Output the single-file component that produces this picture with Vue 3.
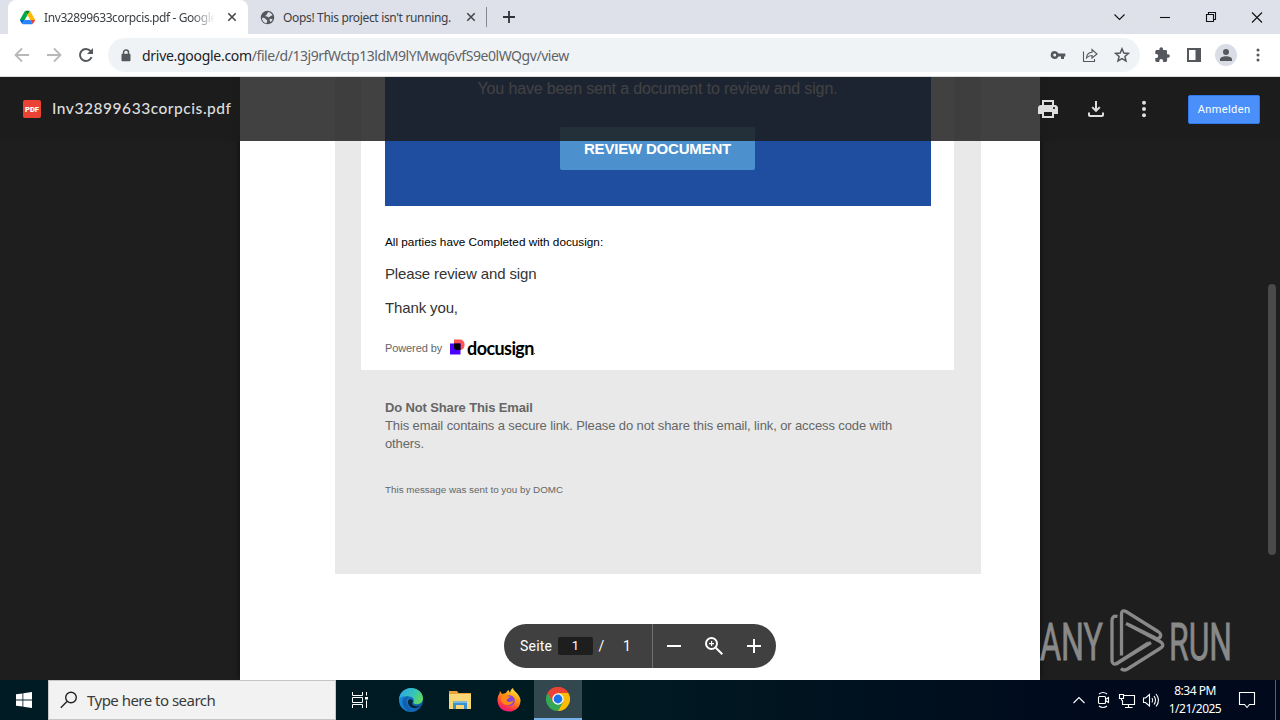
<script setup>
const url = { host: 'drive.google.com', path: '/file/d/13j9rfWctp13ldM9lYMwq6vfS9e0lWQgv/view' }
</script>

<template>
  <div class="desktop">
    <header class="tabstrip">
      <div class="tab active">
        <svg class="i16" viewBox="0 0 87.3 78">
          <path d="m6.6 66.85 3.85 6.65c.8 1.4 1.95 2.5 3.3 3.3l13.75-23.8h-27.5c0 1.55.4 3.1 1.2 4.5z" fill="#0066da" />
          <path d="m43.65 25-13.75-23.8c-1.35.8-2.5 1.9-3.3 3.3l-25.4 44a9.06 9.06 0 0 0-1.2 4.5h27.5z" fill="#00ac47" />
          <path d="m73.55 76.8c1.35-.8 2.5-1.9 3.3-3.3l1.6-2.75 7.65-13.25c.8-1.4 1.2-2.95 1.2-4.5h-27.5l5.85 11.5z" fill="#ea4335" />
          <path d="m43.65 25 13.75-23.8c-1.35-.8-2.9-1.2-4.5-1.2h-18.5c-1.6 0-3.15.45-4.5 1.2z" fill="#00832d" />
          <path d="m59.8 53h-32.3l-13.75 23.8c1.35.8 2.9 1.2 4.5 1.2h50.8c1.6 0 3.15-.45 4.5-1.2z" fill="#2684fc" />
          <path d="m73.4 26.5-12.7-22c-.8-1.4-1.95-2.5-3.3-3.3l-13.75 23.8 16.15 28h27.45c0-1.55-.4-3.1-1.2-4.5z" fill="#ffba00" />
        </svg>
        <span class="tab-title first">Inv32899633corpcis.pdf - Google</span>
        <svg class="x" viewBox="0 0 10 10"><path d="M1.3 1.3l7.4 7.4M8.7 1.3L1.3 8.7" /></svg>
      </div>
      <div class="tab second">
        <svg class="i16" viewBox="0 0 16 16">
          <circle cx="8" cy="8" r="7.2" fill="#54585d" />
          <path d="M2.2 8.2c2 .1 3.3.4 3.8 1.4.3.8 1.5.7 1.7 1.6.2 1-.4 1.4-.6 3C4 13.700 2 11.500 2.200 8.200zM8.300 2.100c2.100 0 4.200 1.400 5 3.400l-2.200 1.100c-1.200.5-.8 1.500-2 1.300-1.100-.2-1.300-1.300-2.700-1.100-.9.100-1.100-1 .1-1.300 1.400-.3.200-1.700 1.800-2zM10.500 9.500c1.100-.4 2.200 0 3 .3-.5 1.300-1.300 2.400-2.500 3.100-.3-1.300-1.300-2.700-.5-3.400z" fill="#dee1e8" />
        </svg>
        <span class="tab-title other">Oops! This project isn't running.</span>
        <svg class="x" viewBox="0 0 10 10"><path d="M1.3 1.3l7.4 7.400M8.700 1.300L1.300 8.700" /></svg>
      </div>
      <i class="tab-sep"></i>
      <svg class="plus" viewBox="0 0 14 14"><path d="M7 1v12M1 7h12" /></svg>
      <div class="win">
        <svg viewBox="0 0 46 28"><path d="M22.500 11.500l5 5 5-5" /></svg>
        <svg viewBox="0 0 46 28"><path d="M18 14.500h10" /></svg>
        <svg viewBox="0 0 46 28"><path d="M18.500 11.500h7v7h-7zM20.500 11.500v-2h7v7h-2" /></svg>
        <svg viewBox="0 0 46 28"><path d="M18 9.500l10 10M28 9.500l-10 10" /></svg>
      </div>
    </header>

    <div class="toolbar">
      <nav class="nav">
        <svg class="off" viewBox="0 0 16 16"><path d="M15 8H2M8 1.500L1.500 8 8 14.500" /></svg>
        <svg class="off" viewBox="0 0 16 16"><path d="M1 8h13M8 1.500L14.500 8 8 14.500" /></svg>
        <svg viewBox="0 0 16 16"><path d="M13.600 10A6 6 0 1 1 12.600 4.100L14 5.600" stroke-width="2" /><path d="M15 1v6H9z" class="solid" /></svg>
      </nav>
      <div class="omnibox">
        <svg class="lock" viewBox="0 0 10 13"><path d="M2.500 5.500V3.500a2.500 2.500 0 0 1 5 0v2" fill="none" stroke="#54585d" stroke-width="1.500" /><rect x=".5" y="4.800" width="9" height="7.400" rx="1" fill="#54585d" /></svg>
        <span class="url"><b>{{ url.host }}</b>{{ url.path }}</span>
        <div class="omni-icons">
          <svg viewBox="0 0 16 16"><path fill-rule="evenodd" class="solid" d="M4.700 4A4 4 0 1 0 8.400 9.500H11V12h3V9.500h1.300v-3H8.400A4 4 0 0 0 4.700 4zM4.700 6.500a1.500 1.500 0 1 1 0 3 1.500 1.500 0 0 1 0-3z" /></svg>
          <svg class="share" viewBox="0 0 16 16"><path d="M1.500 4.500v10h11V12M4.500 11c.3-3.500 2-5.500 5.500-5.700V2.500L15 7l-5 4V8.500C7.500 8.500 6 9.300 4.500 11z" /></svg>
          <svg viewBox="0 0 16 16"><path d="M8 1.800l1.800 4.200 4.600.4-3.500 3 1.100 4.500L8 11.500l-4 2.400 1.100-4.500-3.500-3 4.600-.4z" stroke-width="1.500" /></svg>
        </div>
      </div>
      <div class="ext">
        <svg viewBox="0 0 16 16"><path class="solid" d="M14 7.300h-1V4.500C13 3.700 12.400 3 11.600 3H9V2a1.800 1.800 0 0 0-3.600 0v1H2.700C2 3 1.300 3.700 1.300 4.500v2.600h1a1.900 1.900 0 0 1 0 3.800h-1v2.700c0 .8.600 1.400 1.400 1.400h2.600v-1a1.900 1.900 0 0 1 3.800 0v1h2.600c.8 0 1.400-.6 1.400-1.400v-2.800h1a1.750 1.750 0 0 0 0-3.500z" /></svg>
        <svg viewBox="0 0 16 16"><path class="solid" fill-rule="evenodd" d="M1 1h14v14H1zM3 3v10h6.500V3z" /></svg>
        <span class="avatar"><svg viewBox="0 0 16 16"><circle class="solid" cx="8" cy="5" r="3" /><path class="solid" d="M2 14v-1.500C2 10.500 5 9.300 8 9.300s6 1.200 6 3.200V14z" /></svg></span>
        <svg viewBox="0 0 16 16"><circle class="solid" cx="8" cy="3" r="1.500" /><circle class="solid" cx="8" cy="8" r="1.500" /><circle class="solid" cx="8" cy="13" r="1.500" /></svg>
      </div>
    </div>

    <main class="viewer">
      <div class="page">
        <div class="mail">
          <div class="card">
            <div class="banner">
              <p>You have been sent a document to review and sign.</p>
              <div class="review">REVIEW DOCUMENT</div>
            </div>
            <p class="t1">All parties have Completed with docusign:</p>
            <p class="t2">Please review and sign</p>
            <p class="t3">Thank you,</p>
            <div class="powered">
              <span class="by">Powered by</span>
              <svg viewBox="0 0 15 16"><path fill="#ff5252" d="M4 .5h5.500c3 0 5 2 5 5.200 0 3.300-2 5.300-5 5.300H4z" /><path fill="#4c00ff" d="M0 4.500h10.500v11H0z" /><path d="M4 4.500h6.500V11H7c-2 0-3-1-3-3z" /></svg>
              <span class="brand">docusign</span><i class="dot"></i>
            </div>
          </div>
          <p class="f1">Do Not Share This Email</p>
          <p class="f2">This email contains a secure link. Please do not share this email, link, or access code with<br>others.</p>
          <p class="f3">This message was sent to you by DOMC</p>
        </div>
      </div>

      <div class="viewer-bar">
        <svg class="pdf" viewBox="0 0 18 18"><rect width="18" height="18" rx="2" fill="#ea4335" /><text x="9" y="12" text-anchor="middle" textLength="14" lengthAdjust="spacingAndGlyphs">PDF</text></svg>
        <span class="file">Inv32899633corpcis.pdf</span>
        <div class="actions">
          <svg viewBox="0 0 24 24"><path fill-rule="evenodd" d="M19 8h-1V3H6v5H5c-1.660 0-3 1.340-3 3v6h4v4h12v-4h4v-6c0-1.660-1.340-3-3-3zM8 5h8v3H8zm8 14H8v-4h8zM18 10a1 1 0 1 1 0 2.200 1 1 0 0 1 0-2.200z" /></svg>
          <svg viewBox="0 0 24 24"><path d="M16.500 10.800l-1.400-1.400L13 11.500V4h-2v7.500L8.900 9.400l-1.400 1.400L12 15.300zM4 15.500V18c0 1.100.9 2 2 2h12c1.100 0 2-.9 2-2v-2.500h-2V18H6v-2.500z" /></svg>
          <svg viewBox="0 0 24 24"><circle cx="12" cy="5.800" r="2" /><circle cx="12" cy="12" r="2" /><circle cx="12" cy="18.200" r="2" /></svg>
        </div>
        <button class="login"><span>Anmelden</span></button>
      </div>

      <i class="thumb"></i>

      <div class="pager">
        <span class="seite">Seite</span><span class="num">1</span><span class="slash">/</span><span class="total">1</span>
        <div class="zoom">
          <svg viewBox="0 0 24 24"><path d="M5 11h14v2H5z" /></svg>
          <svg viewBox="0 0 24 24"><path fill="none" stroke="#fff" stroke-width="2" d="M14 14l6.300 6.300M15 9.500a5.500 5.500 0 1 1-11 0 5.500 5.500 0 0 1 11 0z" /><path d="M9 7h1.200v2H12v1.200h-1.800V12H9v-1.800H7V9h2z" /></svg>
          <svg viewBox="0 0 24 24"><path d="M19 13h-6v6h-2v-6H5v-2h6V5h2v6h6z" /></svg>
        </div>
      </div>

      <svg class="mark" viewBox="0 0 200 70">
        <text x="1" y="50.500" textLength="63" lengthAdjust="spacingAndGlyphs">ANY</text>
        <text x="130" y="50.500" textLength="63" lengthAdjust="spacingAndGlyphs">RUN</text>
        <g fill="none" stroke="#898989" stroke-width="3.300" stroke-linejoin="round">
          <path d="M78.500 7.500c-4-1-5.500 1-5.500 4V51.500c0 3 2 4.500 5 2.800L112 33.500" />
          <path d="M82.500 46.500V5c0-3 2-4 4.500-2.500L119 22.500c6 4 1 9-3.500 6L87 14.500" />
          <path d="M77 55L109.500 34M82 59.500c2 2 4 2 6.500.5L121 39.500c4-2.500 3.500-5 0-7L90 16" />
        </g>
      </svg>
    </main>

    <footer class="taskbar">
      <div class="cell"><svg class="i16" viewBox="0 0 16 16" fill="#fff"><path d="M0 2.300l6.500-.9v6.200H0zM7.300 1.200L16 0v7.600H7.300zM0 8.400h6.500v6.200L0 13.700zM7.300 8.400H16V16l-8.700-1.200z" /></svg></div>
      <div class="search">
        <svg viewBox="0 0 18 18"><circle cx="11" cy="6.500" r="5.300" /><path d="M7 10.500L.8 16.700" /></svg>
        <span>Type here to search</span>
      </div>
      <div class="cell"><svg class="tv" viewBox="0 0 16 16"><path d="M.5 0v3.500h10V0M.5 16v-3.500h10V16M.5 5.500h10v5H.5zM14.500 0v3.500M14.500 8.500V16" /><path d="M13 5h3v2.500h-3z" fill="#fff" stroke="none" /></svg></div>
      <div class="apps">
        <div class="cell">
          <svg class="i24" viewBox="0 0 24 24">
            <defs>
              <linearGradient id="eg" x1="0" x2="1" y1=".2" y2=".6"><stop stop-color="#2aa5e8" /><stop offset=".6" stop-color="#38c6b5" /><stop offset="1" stop-color="#61d85d" /></linearGradient>
              <linearGradient id="eb" x1="0" x2="1"><stop stop-color="#168ad9" /><stop offset="1" stop-color="#0d53a0" /></linearGradient>
            </defs>
            <circle cx="12" cy="12" r="12" fill="url(#eb)" />
            <path d="M0 11.500C.5 5 5.500 0 12 0s12 4.500 12 10.500c0 3.500-2.500 5.700-6 5.700-3 0-4.200-1-3.600-2.200.9-1.500.7-5.200-4.400-5.500C5.500 7.800 1 8.500 0 11.500z" fill="url(#eg)" />
            <path d="M9 13c-.5 4.500 3.500 8.500 9 6.500 2-.7 3.500-1.200 4.500-1.800-4 1.500-11.500.3-8.500-4-.5-3-4.500-3-5-.7z" fill="#06263a" />
            <path d="M3.500 13c.5-3.300 4-5 6.500-4.500-4.500 3-2 12 5 15C8 25 3 19 3.500 13z" fill="#1460b0" />
          </svg>
        </div>
        <div class="cell">
          <svg class="fold" viewBox="0 0 22 18"><path fill="#e8a33d" d="M0 0h8l1.500 2H22v3H0z" /><path fill="#f8d775" d="M0 3h22v15H0z" /><path fill="#3c92cf" d="M4 10.500h14V18h-3v-4H7v4H4z" /><path fill="#77bce8" d="M4 10.500h14v1.500H4z" /></svg>
        </div>
        <div class="cell">
          <svg class="i24" viewBox="0 0 24 24">
            <defs><linearGradient id="ff" x1=".8" y1="0" x2=".3" y2="1"><stop stop-color="#fff44f" /><stop offset=".4" stop-color="#ff980e" /><stop offset=".8" stop-color="#ff3647" /><stop offset="1" stop-color="#e31587" /></linearGradient></defs>
            <path d="M3 3l2 3 4-1c.5-1.500 1.500-2.500 3-3-.3 1 .3 2 1 2.500C13.500 2 14.500 1 16 0c0 3 6 5 7.500 11.500C24 18.500 18.500 23.500 12 23.500S.5 19 .5 12c0-3.500 1-5 2-6.500z" fill="url(#ff)" />
            <circle cx="12.500" cy="12.500" r="5.300" fill="#8645d8" />
            <path d="M4 10c2-3 5-3 7-1.500 1-.5 2 0 2.500.5-1 .5-2.500 1-2.500 2-1.500 0-2 1.500-.5 2.500 2.500 1.500 4-.5 6-1-1 4-5 5.500-8.500 4S4 13 4 10z" fill="#ff8a16" />
          </svg>
        </div>
        <div class="cell on">
          <svg class="i24" viewBox="0 0 24 24">
            <path d="M12 12L1.600 6A12 12 0 0 1 22.400 6z" fill="#ea4335" />
            <path d="M12 12L1.600 6A12 12 0 0 0 12 24l5-9z" fill="#34a853" />
            <path d="M12 12l5 3-5 9A12 12 0 0 0 22.400 6H12z" fill="#fbbc05" />
            <path d="M12 6h10.400A12 12 0 0 0 1.600 6L7 15z" fill="#ea4335" />
            <circle cx="12" cy="12" r="5.700" fill="#fff" /><circle cx="12" cy="12" r="4.400" fill="#1a73e8" />
          </svg>
        </div>
      </div>
      <div class="tray">
        <svg viewBox="0 0 24 24"><path d="M6.500 15l5.500-5.500 5.500 5.500" /></svg>
        <svg viewBox="0 0 24 24"><path d="M8.500 8.500h5a1 1 0 0 1 1 1v5a1 1 0 0 1-1 1h-5a1 1 0 0 1-1-1v-5a1 1 0 0 1 1-1zM14.500 11.500l3-2v5l-3-2M8 6c2.500-1.800 5.500-1.800 8 0M8 18c2.500 1.800 5.500 1.800 8 0" /></svg>
        <svg viewBox="0 0 24 24"><path d="M9 7.500h10.500v9H7.500V12M13.500 16.500v3M10 19.500h7.500M4.500 6.500h4v4h-4zM6.500 10.500v2" /></svg>
        <svg viewBox="0 0 24 24"><path d="M4.500 10v4.500h2l4 3.500V6.500l-4 3.500zM13 10q1.500 2.200 0 4.500M15 8q3 4.200 0 8.500M17 6q5 6.200 0 12.500" /></svg>
        <div class="clock"><span>8:34 PM</span><span>1/21/2025</span></div>
        <svg class="note" viewBox="0 0 24 24"><path d="M4.500 4.500h15v12h-5l-2.500 3-2.500-3h-5z" /></svg>
        <i class="peek"></i>
      </div>
    </footer>
  </div>
</template>

<style>
body { margin: 0; overflow: hidden; }
</style>

<style scoped>
* { box-sizing: border-box; }
p { margin: 0; }
svg { display: block; flex: none; }
span { white-space: nowrap; }
.desktop { width: 1280px; height: 720px; display: flex; flex-direction: column; overflow: hidden; font-family: "Noto Sans", sans-serif; }
.i16 { width: 16px; height: 16px; }
.i24 { width: 24px; height: 24px; }

.tabstrip { height: 34px; flex: none; background: #dee1e9; display: flex; align-items: center; padding-left: 8px; }
.tab { display: flex; align-items: center; height: 34px; }
.tab.active { width: 240px; background: #fff; border-radius: 8px 8px 0 0; padding-left: 12px; }
.tab .i16 { width: 15px; height: 15px; }
.tab-title { font-size: 12px; color: #3c4043; overflow: hidden; }
.tab-title.first { width: 171px; margin-left: 9px; letter-spacing: -0.4px; -webkit-mask-image: linear-gradient(90deg, #000 86%, transparent); mask-image: linear-gradient(90deg, #000 86%, transparent); }
.x { width: 10px; height: 10px; stroke: #45494d; stroke-width: 1.6; fill: none; margin-left: 12px; }
.tab.second { padding-left: 12px; width: 238px; }
.tab-title.other { width: 173px; margin-left: 8px; letter-spacing: -0.34px; }
.tab.second .x { margin-left: 10px; }
.tab-sep { width: 1px; height: 20px; background: #85898f; }
.plus { width: 14px; height: 14px; margin-left: 15px; stroke: #30343a; stroke-width: 1.8; }
.win { margin-left: auto; display: flex; }
.win svg { width: 46px; height: 28px; fill: none; stroke: #111; stroke-width: 1.1; }
.win svg:first-child { margin-right: 0; padding: 0; transform: translateX(-4px); }

.toolbar { height: 43px; flex: none; background: #fff; border-bottom: 1px solid #dcdcdc; display: flex; align-items: center; padding-left: 14px; }
.nav { display: flex; gap: 16px; }
.toolbar svg { width: 16px; height: 16px; fill: none; stroke: #54585d; stroke-width: 1.8; }
.toolbar .solid { fill: #54585d; stroke: none; }
.toolbar .off { stroke: #b6b8ba; }
.toolbar .share { stroke-width: 1.1; }
.omnibox { margin-left: 14px; width: 1032px; height: 34px; border-radius: 17px; background: #f0f3f5; display: flex; align-items: center; padding: 0 10px 0 13px; }
.toolbar .lock { width: 10px; height: 13px; stroke: none; }
.url { margin-left: 11px; font-size: 14px; color: #5f6368; letter-spacing: -0.45px; }
.url b { font-weight: 400; color: #202124; letter-spacing: -0.29px; }
.omni-icons { display: flex; gap: 16px; margin-left: auto; }
.ext { display: flex; align-items: center; margin-left: 14px; gap: 16px; }
.avatar { width: 22px; height: 22px; border-radius: 50%; background: #dadde5; display: grid; place-items: center; margin: 0 -3px; }

.viewer { position: relative; height: 603px; flex: none; background: #1e1e1e; overflow: hidden; font-family: "Liberation Sans", Arial, sans-serif; }
.page { width: 800px; height: 603px; margin: 0 auto; background: #fff; padding-left: 95px; box-shadow: 0 0 6px #0008; }
.mail { width: 646px; height: 497px; background: #e9e9e9; padding-left: 26px; }
.card { width: 593px; height: 293px; background: #fff; padding-left: 24px; color: #333; }
.banner { width: 546px; height: 129px; background: #1f4ea1; text-align: center; color: #fff; padding-right: 1px; }
.banner p { height: 50px; padding-top: 3px; font-size: 16px; line-height: 18px; letter-spacing: -0.14px; }
.review { width: 195px; height: 43px; margin: 0 auto; background: #4c90cd; border-radius: 2px; font-weight: 700; font-size: 15px; line-height: 44px; letter-spacing: -0.2px; }
.t1 { font-size: 11.75px; line-height: 14px; margin-top: 29px; color: #000; }
.t2, .t3 { font-size: 15px; line-height: 18px; margin-top: 16px; letter-spacing: -0.13px; }
.powered { display: flex; align-items: center; height: 20px; margin-top: 21px; }
.by { font-size: 11px; color: #666; letter-spacing: -0.1px; }
.powered svg { width: 15px; height: 16px; margin: -3px 2px 0 8px; }
.brand { font-family: Lato, sans-serif; font-weight: 700; font-size: 18px; line-height: 20px; letter-spacing: -0.6px; color: #000; }
.dot { width: 1px; height: 1px; background: #555; margin-top: 10px; }
.f1, .f2, .f3 { margin-left: 24px; color: #666; white-space: nowrap; }
.f1 { font-size: 13px; font-weight: 700; line-height: 18px; margin-top: 29px; letter-spacing: -0.14px; }
.f2 { font-size: 13px; line-height: 18px; letter-spacing: -0.11px; }
.f3 { font-size: 9.830px; line-height: 12px; margin-top: 31px; }

.viewer-bar { position: absolute; inset: 0 0 auto; height: 64px; display: flex; align-items: center; padding: 0 20px 0 23px; background: rgba(27, 28, 28, .835); }
.pdf { width: 18px; height: 18px; }
.pdf text { font: 900 7.500px Roboto, sans-serif; fill: #fff; }
.file { margin-left: 11px; margin-top: -2px; font: 500 15.500px Lato, sans-serif; color: #dedede; letter-spacing: .54px; }
.actions { display: flex; gap: 24px; margin-left: auto; margin-right: 32px; }
.actions svg { width: 24px; height: 24px; fill: #dedede; }
.login { width: 72px; height: 29px; padding: 0; border: 1px solid #3079ed; border-radius: 2px; background: #4b8ffb; color: #fff; font: 400 11px Roboto, sans-serif; letter-spacing: .4px; }
.thumb { position: absolute; right: 4px; top: 207px; width: 8px; height: 271px; border-radius: 4px; background: #4a4a4a; }

.pager { position: absolute; left: 504px; bottom: 12px; width: 272px; height: 44px; border-radius: 22px; background: #404040; color: #fff; display: flex; align-items: center; padding-left: 16px; font: 14px Roboto, sans-serif; }
.seite { width: 38px; letter-spacing: .2px; }
.num { width: 35px; height: 18px; line-height: 18px; text-align: center; background: #1e1e1e; border-radius: 2px; font-size: 13px; }
.slash { width: 17px; text-align: center; }
.total { width: 34px; text-align: center; }
.zoom { display: flex; align-items: center; height: 44px; margin-left: 8px; border-left: 1px solid #707070; padding-left: 9px; gap: 16px; }
.zoom svg { width: 24px; height: 24px; fill: #fff; }

.mark { position: absolute; left: 1039px; top: 532px; width: 200px; height: 70px; overflow: visible; }
.mark text { font: 400 52px Roboto, sans-serif; fill: #898989; stroke: #898989; stroke-width: .8; }

.taskbar { height: 40px; flex: none; display: flex; background: linear-gradient(90deg, #001b24 0%, #001a22 48%, #000a1c 85%); }
.cell { width: 48px; height: 40px; display: grid; place-items: center; }
.search { width: 288px; background: #f2f2f2; border: 1px solid #c6c6c6; display: flex; align-items: center; padding-left: 11px; }
.search svg { width: 18px; height: 18px; fill: none; stroke: #222; stroke-width: 1.4; }
.search span { margin-left: 9px; font-size: 15px; color: #3a3a3a; letter-spacing: -0.52px; font-weight: 400; }
.tv { width: 16px; height: 16px; fill: none; stroke: #fff; stroke-width: 1; }
.apps { display: flex; gap: 1px; margin-left: 3px; }
.fold { width: 22px; height: 18px; }
.on { background: #33474f; border-bottom: 2px solid #76b0ea; }
.tray { margin-left: auto; display: flex; align-items: center; }
.tray svg { width: 24px; height: 24px; fill: none; stroke: #fff; stroke-width: 1.1; }
.clock { width: 64px; display: flex; flex-direction: column; align-items: center; font-size: 12px; line-height: 18px; color: #fff; letter-spacing: -0.5px; }
.tray .note { margin: 0 8px; }
.peek { width: 1px; height: 40px; margin: 0 4px 0 8px; background: #59606c; }
</style>
